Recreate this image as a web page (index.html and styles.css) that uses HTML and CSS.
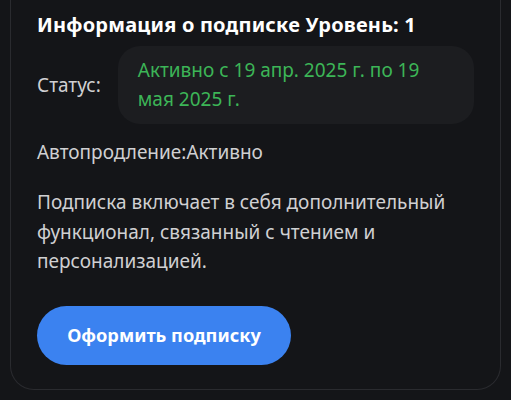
FILE: index.html
```html
<!DOCTYPE html>
<html lang="ru">

<head>
    <meta charset="UTF-8">
    <meta name="viewport" content="width=device-width, initial-scale=1.0">
    <title>Информация о подписке</title>
    <link rel="stylesheet" href="styles.css">
</head>

<body>
    <div class="card">
        <h2 class="card-title">Информация о подписке Уровень: 1</h2>

        <div class="status-row">
            <span class="label">Статус:</span>
            <div class="status-pill">Активно с 19 апр. 2025 г. по 19 мая 2025 г.</div>
        </div>

        <p class="renew">Автопродление:Активно</p>

        <p class="description">Подписка включает в себя дополнительный функционал, связанный с чтением и персонализацией.</p>

        <button class="subscribe-btn">Оформить подписку</button>
    </div>
</body>

</html>
```

FILE: styles.css
```css
body,
html {
    margin: 0;
    padding: 0;
    background-color: #141518;
    font-family: "Noto Sans", "Open Sans", sans-serif;
}

.card {
    margin: 0 10px;
    padding: 12px 26px 24px;
    background-color: #141518;
    border: 1px solid #2a2b2f;
    border-top: none;
    border-radius: 0 0 24px 24px;
    box-sizing: border-box;
    height: 390px;
}

.card-title {
    margin: 0;
    font-size: 20px;
    font-weight: 700;
    letter-spacing: 0.2px;
    line-height: 26px;
    color: #ffffff;
}

.status-row {
    display: flex;
    align-items: center;
    gap: 17px;
    margin-top: 8px;
}

.label {
    font-size: 19px;
    color: #d0d0d2;
}

.status-pill {
    flex: 1;
    background-color: #1c1d20;
    border-radius: 22px;
    padding: 10px 40px 10px 20px;
    font-size: 19px;
    line-height: 29px;
    color: #3cb557;
}

.renew {
    margin: 14px 0 0;
    font-size: 19px;
    line-height: 28px;
    color: #d0d0d2;
}

.description {
    margin: 22px 0 0;
    font-size: 19px;
    line-height: 29.5px;
    color: #d0d0d2;
}

.subscribe-btn {
    margin: 29px 0 0;
    width: 254px;
    height: 59px;
    border: none;
    border-radius: 30px;
    background-color: #3b82f0;
    color: #ffffff;
    font-family: inherit;
    font-size: 18.2px;
    font-weight: 700;
    cursor: pointer;
}
```
